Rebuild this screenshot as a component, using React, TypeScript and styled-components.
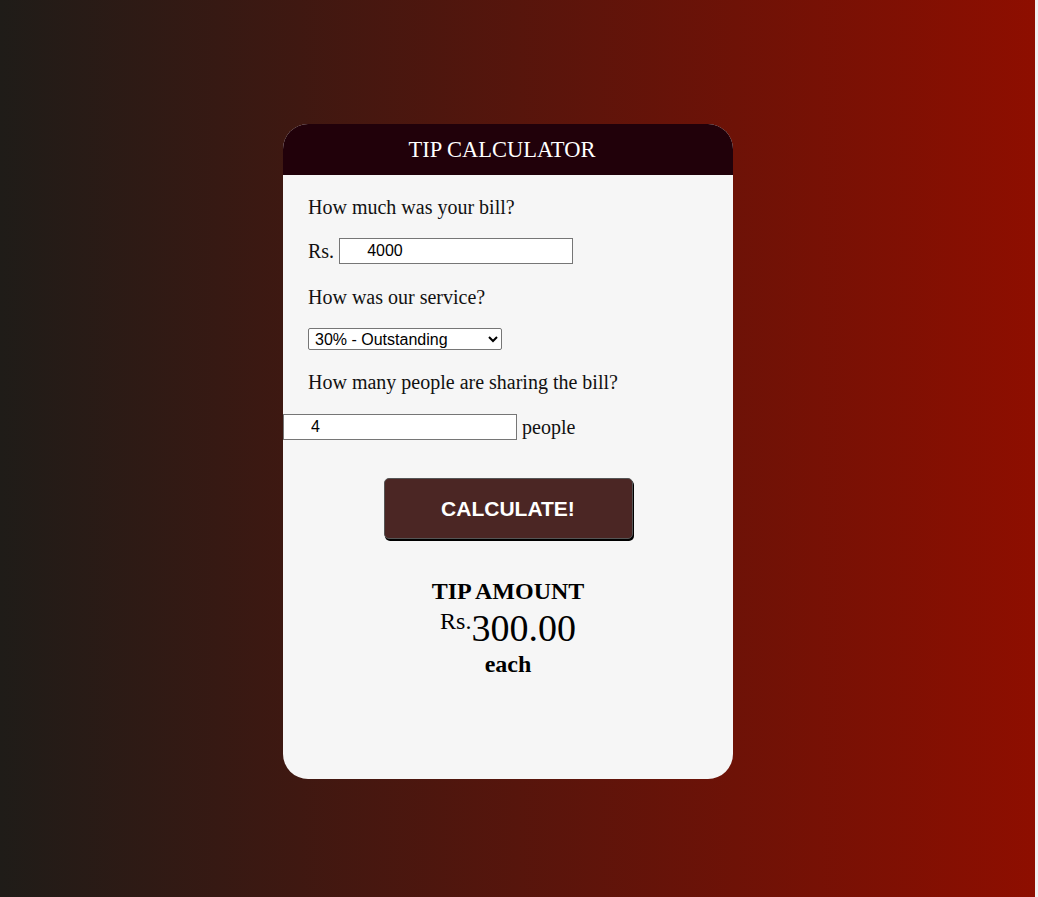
import React from "react";
import styled, { createGlobalStyle } from "styled-components";

const Global = createGlobalStyle`
  html, body { margin: 0; padding: 0; background: #f0f0f0; }
  body { font-family: "Liberation Serif", "Times New Roman", serif; }
`;

const Page = styled.div`
  width: calc(100vw - 3px);
  min-height: 897px;
  box-sizing: border-box;
  background: linear-gradient(to right, #1f1c18, #8e0e00);
  display: flex;
  justify-content: center;
  align-items: flex-start;
  padding: 124px 19px 0 0;
`;

const Card = styled.div`
  width: 450px;
  height: 655px;
  background: #f6f6f6;
  border-radius: 25px;
  overflow: hidden;
  display: flex;
  flex-direction: column;
`;

const Header = styled.div`
  height: 51px;
  background: #21010a;
  color: #fff;
  display: flex;
  align-items: center;
  justify-content: center;
`;

const Title = styled.h1`
  margin: 0;
  font-size: 22.5px;
  font-weight: normal;
  line-height: 1;
  padding: 2px 12px 0 0;
`;

const Body = styled.div`
  display: flex;
  flex-direction: column;
  align-items: flex-start;
  padding: 0 25px;
  color: #111;
`;

const Label = styled.p<{ $top: number }>`
  margin: ${(p) => p.$top}px 0 0;
  font-size: 20px;
  line-height: 23px;
`;

const Row = styled.div<{ $top: number; $shift?: number }>`
  display: flex;
  align-items: center;
  gap: 5px;
  margin-top: ${(p) => p.$top}px;
  margin-left: ${(p) => p.$shift ?? 0}px;
  font-size: 20px;
`;

const TextInput = styled.input`
  box-sizing: border-box;
  width: 234px;
  height: 26px;
  border: 1px solid #767676;
  border-radius: 0;
  background: #fff;
  padding: 0 0 0 27px;
  font-family: "Liberation Sans", Arial, sans-serif;
  font-size: 16px;
  color: #000;
  outline: none;
`;

const Select = styled.select`
  box-sizing: border-box;
  width: 194px;
  height: 22px;
  margin-top: 19px;
  border: 1px solid #767676;
  border-radius: 2px;
  background: #fff;
  font-family: "Liberation Sans", Arial, sans-serif;
  font-size: 16px;
  color: #000;
  padding: 0 2px;
`;

const Button = styled.button`
  align-self: center;
  margin-top: 38px;
  width: 249px;
  height: 61px;
  background: #4b2624;
  color: #fff;
  border: 1px solid #555;
  border-radius: 5px;
  box-shadow: 1px 2px 0 #000;
  font-family: "Liberation Sans", Arial, sans-serif;
  font-weight: bold;
  font-size: 21px;
  cursor: pointer;
`;

const Result = styled.div`
  align-self: center;
  margin-top: 39px;
  display: flex;
  flex-direction: column;
  align-items: center;
  color: #000;
`;

const ResultTitle = styled.div`
  font-size: 24px;
  font-weight: bold;
  line-height: 27px;
`;

const Amount = styled.div`
  font-size: 38px;
  line-height: 40px;
  margin-top: -4px;
`;

const Currency = styled.span`
  font-size: 24px;
  vertical-align: 12px;
`;

const Each = styled.div`
  font-size: 24px;
  font-weight: bold;
  line-height: 27px;
  margin-top: 3px;
`;

export default function App() {
  return (
    <>
      <Global />
      <Page>
        <Card>
          <Header>
            <Title>TIP CALCULATOR</Title>
          </Header>
          <Body>
            <Label $top={21}>How much was your bill?</Label>
            <Row $top={19}>
              <span>Rs.</span>
              <TextInput defaultValue="4000" />
            </Row>
            <Label $top={22}>How was our service?</Label>
            <Select defaultValue="30">
              <option value="30">30% - Outstanding</option>
              <option value="20">20% - Good</option>
              <option value="15">15% - It was OK</option>
              <option value="10">10% - Bad</option>
              <option value="5">5% - Terrible</option>
            </Select>
            <Label $top={21}>How many people are sharing the bill?</Label>
            <Row $top={20} $shift={-25}>
              <TextInput defaultValue="4" />
              <span>people</span>
            </Row>
            <Button>CALCULATE!</Button>
            <Result>
              <ResultTitle>TIP AMOUNT</ResultTitle>
              <Amount>
                <Currency>Rs.</Currency>300.00
              </Amount>
              <Each>each</Each>
            </Result>
          </Body>
        </Card>
      </Page>
    </>
  );
}
